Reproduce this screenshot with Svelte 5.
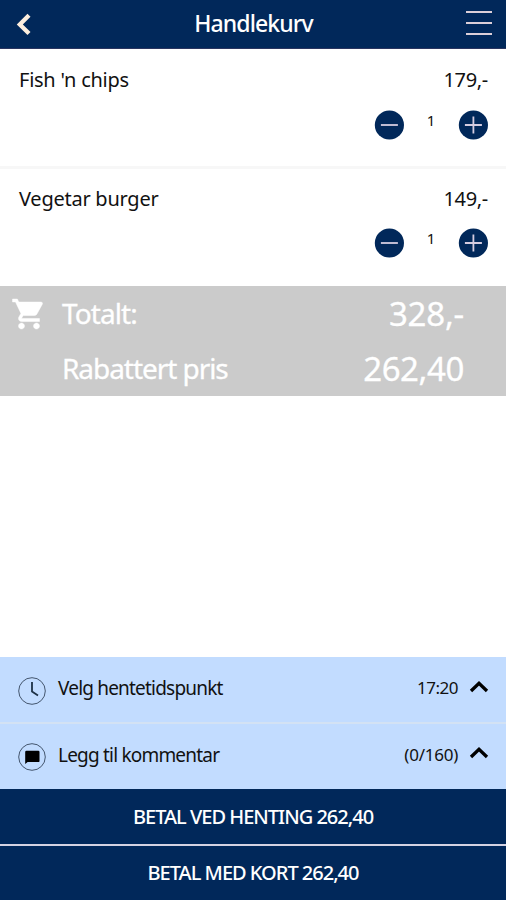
<script lang="ts">
	let items = $state([
		{ name: "Fish 'n chips", price: 179, count: 1 },
		{ name: 'Vegetar burger', price: 149, count: 1 }
	]);

	const maxComment = 160;
	let comment = $state('');

	const total = $derived(items.reduce((sum, item) => sum + item.price * item.count, 0));
	const discounted = $derived((total * 0.8).toFixed(2).replace('.', ','));
</script>

<div class="app">
	<header>
		<button class="back" aria-label="Tilbake">
			<svg width="16" height="24" viewBox="0 0 16 24">
				<path d="M14 3.2 4.8 12.4l9.2 9.2" />
			</svg>
		</button>
		<h1>Handlekurv</h1>
		<button class="menu" aria-label="Meny">
			<span></span>
			<span></span>
			<span></span>
		</button>
	</header>

	<ul>
		{#each items as item}
			<li>
				<div class="line">
					<span>{item.name}</span>
					<span class="price">{item.price},-</span>
				</div>
				<div class="amount">
					<button aria-label="Færre" onclick={() => (item.count = Math.max(0, item.count - 1))}>
						<svg width="30" height="30" viewBox="0 0 30 30">
							<circle cx="15.4" cy="15" r="14.6" />
							<path d="M6.9 15h17" />
						</svg>
					</button>
					<span>{item.count}</span>
					<button aria-label="Flere" onclick={() => (item.count += 1)}>
						<svg width="30" height="30" viewBox="0 0 30 30">
							<circle cx="15.4" cy="15" r="14.6" />
							<path d="M6.9 15h17M15.4 6.5v17" />
						</svg>
					</button>
				</div>
			</li>
		{/each}
	</ul>

	<section class="total">
		<div class="row">
			<svg class="cart" width="36" height="36" viewBox="0 0 24 24">
				<path d="M7 18c-1.1 0-1.99.9-1.99 2S5.9 22 7 22s2-.9 2-2-.9-2-2-2zM1 2v2h2l3.6 7.59-1.35 2.45c-.16.28-.25.61-.25.96 0 1.1.9 2 2 2h12v-2H7.42c-.14 0-.25-.11-.25-.25l.03-.12.9-1.63h7.45c.75 0 1.41-.41 1.75-1.03l3.58-6.49A1 1 0 0 0 20 4H5.21l-.94-2H1zm16 16c-1.1 0-1.99.9-1.99 2s.89 2 1.99 2 2-.9 2-2-.9-2-2-2z" />
			</svg>
			<span class="label">Totalt:</span>
			<span class="sum">{total},-</span>
		</div>
		<div class="row">
			<span class="label discounted">Rabattert pris</span>
			<span class="sum discounted">{discounted}</span>
		</div>
	</section>

	<footer>
		<div class="option">
			<svg class="icon" width="28" height="28" viewBox="0 0 28 28">
				<circle cx="14" cy="14" r="13.3" />
				<path class="hands" d="M14 5v9.6l6 3.9" />
			</svg>
			<span class="text">Velg hentetidspunkt</span>
			<span class="value">17:20</span>
			<svg class="chevron" width="20" height="14" viewBox="0 0 20 14">
				<path d="M2 12 10 4.2l8 7.8" />
			</svg>
		</div>
		<div class="option">
			<svg class="icon" width="28" height="28" viewBox="0 0 28 28">
				<circle cx="14" cy="14" r="13.3" />
				<path class="bubble" d="M8.5 7.8h11.8q1.2 0 1.2 1.2v8.9q0 1.2-1.2 1.2H9.6L7.2 21V9q0-1.2 1.3-1.2z" />
			</svg>
			<span class="text">Legg til kommentar</span>
			<span class="value comment">({comment.length}/{maxComment})</span>
			<svg class="chevron" width="20" height="14" viewBox="0 0 20 14">
				<path d="M2 12 10 4.2l8 7.8" />
			</svg>
		</div>
		<button class="pay">BETAL VED HENTING {discounted}</button>
		<button class="pay">BETAL MED KORT {discounted}</button>
	</footer>
</div>

<style>
	:global(body) {
		margin: 0;
	}
	.app {
		display: flex;
		flex-direction: column;
		height: 900px;
		background: #fff;
		color: #111;
		font-family: 'Noto Sans', sans-serif;
	}
	button {
		background: none;
		border: none;
		padding: 0;
		font: inherit;
		cursor: pointer;
	}
	svg {
		display: block;
		overflow: visible;
	}
	header {
		display: grid;
		grid-template-columns: 1fr auto 1fr;
		align-items: center;
		box-sizing: border-box;
		height: 49px;
		padding: 0 14px 0 15px;
		background: #01285a;
		border-bottom: 1px solid #2a3560;
		color: #fff;
	}
	.back {
		justify-self: start;
	}
	.back path {
		fill: none;
		stroke: #fdeedd;
		stroke-width: 4.3;
	}
	h1 {
		margin: 0 0 2px;
		font-size: 23px;
		font-weight: 500;
		line-height: 32px;
		letter-spacing: -.9px;
	}
	.menu {
		justify-self: end;
		display: flex;
		flex-direction: column;
		gap: 9px;
		margin-bottom: 2px;
	}
	.menu span {
		width: 26px;
		height: 2px;
		background: #dccfd8;
	}
	ul {
		list-style: none;
		margin: 0;
		padding: 0;
	}
	li {
		box-sizing: border-box;
		height: 117px;
		padding: 17px 18px 0 19px;
	}
	li + li {
		height: 120px;
		padding-top: 16px;
		border-top: 3px solid #f7f7f7;
	}
	.line {
		display: flex;
		justify-content: space-between;
		font-size: 20px;
		line-height: 28px;
		letter-spacing: -.3px;
	}
	.line span:first-child {
		letter-spacing: -.25px;
	}
	.amount {
		display: flex;
		justify-content: flex-end;
		margin-top: 16px;
	}
	li + li .amount {
		margin-top: 15px;
	}
	.amount span {
		width: 54px;
		text-align: center;
		font-size: 15px;
		line-height: 21px;
	}
	.amount circle {
		fill: #01285a;
	}
	.amount path {
		stroke: #d5cce0;
		stroke-width: 1.8;
	}
	.total {
		box-sizing: border-box;
		height: 110px;
		background: #cbcbcb;
		color: #fff;
	}
	.row {
		display: flex;
		align-items: center;
		height: 55px;
		padding: 0 42px 0 11px;
	}
	.cart {
		fill: #fff;
		stroke: #fff;
		stroke-width: .3;
	}
	.label {
		margin: 0 0 2px 15px;
		font-size: 28px;
		letter-spacing: -.9px;
		-webkit-text-stroke: .3px #fff;
	}
	.label.discounted {
		margin-left: 51px;
		letter-spacing: -1.05px;
	}
	.sum {
		margin-left: auto;
		font-size: 33px;
		letter-spacing: -.2px;
		-webkit-text-stroke: .3px #fff;
	}
	.sum.discounted {
		letter-spacing: -.4px;
	}
	footer {
		margin-top: auto;
	}
	.option {
		display: flex;
		align-items: center;
		box-sizing: border-box;
		height: 65px;
		padding: 0 17px 0 18px;
		background: #c2dcff;
	}
	.option + .option {
		height: 67px;
		border-top: 2px solid #d3e2f4;
	}
	.icon {
		margin-top: 2px;
	}
	.option + .option .icon {
		margin-top: 0;
	}
	.icon circle {
		fill: none;
		stroke: #44566e;
		stroke-width: 1;
	}
	.hands {
		fill: none;
		stroke: #1d3146;
		stroke-width: 1.8;
	}
	.text {
		margin: 0 auto 4px 12px;
		font-size: 19px;
		letter-spacing: -.8px;
	}
	.value {
		margin: 0 11px 4px 0;
		font-size: 17px;
		letter-spacing: -.5px;
	}
	.value.comment {
		letter-spacing: -.25px;
	}
	.chevron {
		margin-bottom: 8px;
	}
	.option + .option .chevron {
		margin-bottom: 10px;
	}
	.chevron path {
		fill: none;
		stroke: #000;
		stroke-width: 3.3;
	}
	.pay {
		display: block;
		box-sizing: border-box;
		width: 100%;
		height: 55px;
		background: #01285a;
		color: #fff;
		font-size: 20px;
		font-weight: 500;
		letter-spacing: -1px;
	}
	.pay + .pay {
		height: 56px;
		padding-bottom: 2px;
		border-top: 2px solid #d4d2e2;
	}
</style>
